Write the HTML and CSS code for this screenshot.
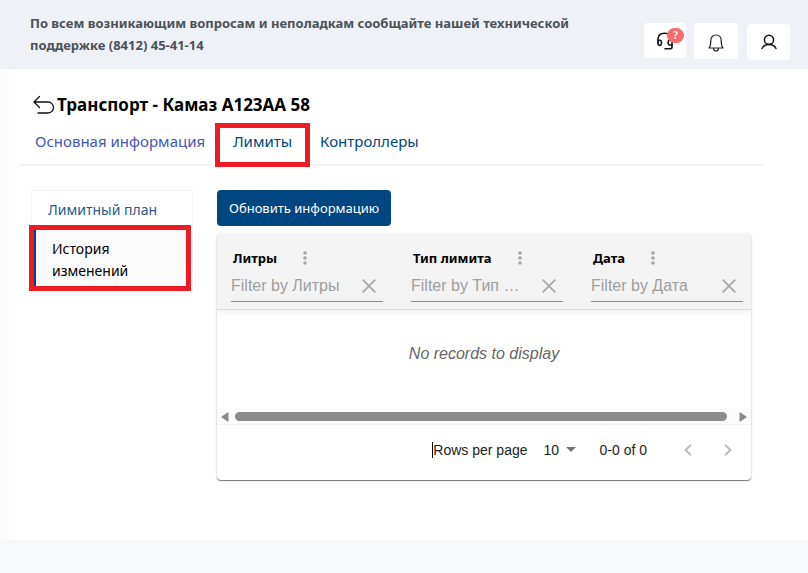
FILE: index.html
```html
<!DOCTYPE html>
<html lang="ru">
<head>
<meta charset="utf-8">
<meta name="viewport" content="width=device-width, initial-scale=1">
<title>Транспорт</title>
<link rel="stylesheet" href="styles.css">
</head>
<body>
<header class="topbar">
  <p class="notice">По всем возникающим вопросам и неполадкам сообщайте нашей технической поддержке (8412) 45-41-14</p>
  <div class="actions">
    <button class="action action-support" type="button" aria-label="Поддержка">
      <svg width="18" height="18" viewBox="0 0 18 18" fill="none" stroke="#111" stroke-width="1.600" stroke-linecap="round" stroke-linejoin="round"><path d="M2 11V7.500C2 3.500 4.500 1.200 8.500 1.200s7.500 2.300 7.500 6.300v7.500c0 1-.8 1.700-1.800 1.700H9"/><path d="M2 8.200h1.800c1 0 1.600.7 1.600 1.600v2c0 1-.7 1.600-1.600 1.600h-.2c-1 0-1.600-.7-1.600-1.600zM16 8.200h-2.200c-1 0-1.600.7-1.600 1.600v1.600c0 1 .7 1.600 1.600 1.600H16"/></svg>
      <span class="badge">?</span>
    </button>
    <button class="action action-bell" type="button" aria-label="Уведомления">
      <svg width="16" height="18" viewBox="0 0 16 18" fill="none" stroke="#222" stroke-width="1.200" stroke-linejoin="round"><path d="M1 14c1.400-1.800 1.800-4 1.800-7.500C2.800 3.200 5 1 8 1s5.200 2.200 5.200 5.500c0 3.500.4 5.700 1.800 7.500z"/><path d="M5.500 14c0 1.800 1 3 2.500 3s2.500-1.200 2.500-3"/></svg>
    </button>
    <button class="action action-user" type="button" aria-label="Профиль">
      <svg width="16" height="16" viewBox="0 0 16 16" fill="none" stroke="#111" stroke-width="1.500" stroke-linecap="round"><circle cx="8" cy="5.800" r="4.600"/><path d="M1 14.500c1.200-2.700 3.800-4.100 7-4.100s5.800 1.400 7 4.100"/></svg>
    </button>
  </div>
</header>
<main class="page">
  <div class="heading">
    <a class="back" href="#" aria-label="Назад"><svg width="22" height="20" viewBox="0 0 22 20" fill="none" stroke="#111" stroke-width="1.300" stroke-linecap="round" stroke-linejoin="round"><path d="M6.500 1.500L1 7l5.500 5.500M1 7h14a5.500 5.500 0 0 1 0 11H5"/></svg></a>
    <h1 class="title">Транспорт - Камаз А123АА 58</h1>
  </div>
  <nav class="tabs">
    <a class="tab tab-first" href="#">Основная информация</a>
    <a class="tab marked" href="#">Лимиты</a>
    <a class="tab" href="#">Контроллеры</a>
  </nav>
  <div class="columns">
    <nav class="side">
      <a class="side-link" href="#">Лимитный план</a>
      <a class="side-link side-current marked" href="#"><span>История изменений</span></a>
    </nav>
    <section class="content">
      <button class="refresh" type="button">Обновить информацию</button>
      <div class="card">
        <table class="grid">
          <colgroup><col class="col"><col class="col"><col></colgroup>
          <thead>
            <tr>
              <th><div class="col-head"><span>Литры</span><button class="more" type="button" aria-label="Меню столбца"><svg width="4" height="14" viewBox="0 0 4 14" fill="#a6a6a6"><circle cx="2" cy="2" r="1.800"/><circle cx="2" cy="7" r="1.800"/><circle cx="2" cy="12" r="1.800"/></svg></button></div>
                <div class="filter"><input type="text" aria-label="Литры" placeholder="Filter by Литры"><button class="clear" type="button" aria-label="Очистить"><svg width="14" height="14" viewBox="0 0 14 14" stroke="#a9a9a9" stroke-width="1.800"><path d="M.7.7l12.600 12.600M13.300.7L.7 13.300"/></svg></button></div></th>
              <th><div class="col-head"><span>Тип лимита</span><button class="more" type="button" aria-label="Меню столбца"><svg width="4" height="14" viewBox="0 0 4 14" fill="#a6a6a6"><circle cx="2" cy="2" r="1.800"/><circle cx="2" cy="7" r="1.800"/><circle cx="2" cy="12" r="1.800"/></svg></button></div>
                <div class="filter"><input type="text" aria-label="Тип лимита" placeholder="Filter by Тип лимита"><button class="clear" type="button" aria-label="Очистить"><svg width="14" height="14" viewBox="0 0 14 14" stroke="#a9a9a9" stroke-width="1.800"><path d="M.7.7l12.600 12.600M13.300.7L.7 13.300"/></svg></button></div></th>
              <th><div class="col-head"><span>Дата</span><button class="more" type="button" aria-label="Меню столбца"><svg width="4" height="14" viewBox="0 0 4 14" fill="#a6a6a6"><circle cx="2" cy="2" r="1.800"/><circle cx="2" cy="7" r="1.800"/><circle cx="2" cy="12" r="1.800"/></svg></button></div>
                <div class="filter"><input type="text" aria-label="Дата" placeholder="Filter by Дата"><button class="clear" type="button" aria-label="Очистить"><svg width="14" height="14" viewBox="0 0 14 14" stroke="#a9a9a9" stroke-width="1.800"><path d="M.7.7l12.600 12.600M13.300.7L.7 13.300"/></svg></button></div></th>
            </tr>
          </thead>
          <tbody><tr><td class="empty" colspan="3">No records to display</td></tr></tbody>
        </table>
        <div class="scroll">
          <svg width="8" height="10" viewBox="0 0 8 10" fill="#8b8b8b"><path d="M7.500 1v8c0 .6-.6.8-1 .5L.7 5.600a.7.7 0 0 1 0-1.200L6.500.5c.4-.3 1-.1 1 .5z"/></svg>
          <div class="thumb"></div>
          <svg width="8" height="10" viewBox="0 0 8 10" fill="#8b8b8b"><path d="M.5 1v8c0 .6.600.8 1 .5l5.800-3.900a.7.7 0 0 0 0-1.200L1.500.5c-.4-.3-1-.1-1 .5z"/></svg>
        </div>
        <div class="pager">
          <label class="rows-label" for="rows">Rows per page</label>
          <div class="rows">
            <select id="rows"><option>10</option></select>
            <svg width="10" height="5" viewBox="0 0 10 5" fill="#757575"><path d="M0 0h10L5 5z"/></svg>
          </div>
          <span class="range">0-0 of 0</span>
          <button class="step" type="button" aria-label="Previous"><svg width="8" height="12" viewBox="0 0 8 12" fill="none" stroke="#bababa" stroke-width="1.900"><path d="M7 .8L1.600 6 7 11.200"/></svg></button>
          <button class="step" type="button" aria-label="Next"><svg width="8" height="12" viewBox="0 0 8 12" fill="none" stroke="#bababa" stroke-width="1.900"><path d="M1 .8L6.400 6 1 11.200"/></svg></button>
        </div>
      </div>
    </section>
  </div>
</main>
</body>
</html>
```
FILE: styles.css
```css
* { box-sizing: border-box; }

body {
  margin: 0;
  min-height: 100vh;
  background: #f7f8fa;
  font: 14px/22px "Noto Sans", sans-serif;
  color: #000;
}

a { color: inherit; text-decoration: none; }

button {
  margin: 0;
  padding: 0;
  border: 0;
  background: none;
  font: inherit;
  cursor: pointer;
}

svg { display: block; flex: none; }

.topbar {
  display: flex;
  justify-content: space-between;
  align-items: flex-start;
  min-height: 69px;
  padding: 12px 18px 0 30px;
  background: #eef2f7;
}

.notice {
  max-width: 580px;
  margin: 0;
  font-size: 13px;
  font-weight: 700;
  color: #4c5156;
}

.actions { display: flex; gap: 8px; padding-top: 11px; }

.action {
  position: relative;
  display: flex;
  align-items: center;
  justify-content: center;
  width: 44px;
  height: 36px;
  border-radius: 4px;
  background: #fff;
}

.action-support { width: 42px; height: 35px; }
.action-bell svg { margin-top: 3px; }
.action-user { width: 43px; margin: 1px 0 0 1px; }

.badge {
  position: absolute;
  top: 5px;
  right: 2px;
  width: 17px;
  border-radius: 8px;
  background: #f56c6c;
  color: #fff;
  font-size: 10px;
  font-weight: 600;
  line-height: 15px;
  text-align: center;
}

.page {
  min-height: 471px;
  padding: 24px 45px 60px 19px;
  background: linear-gradient(90deg, #fbfbfb, #fff 14px);
}

.heading { display: flex; align-items: center; gap: 2px; padding-left: 14px; }

.title { margin: 0; font-size: 17px; line-height: 24px; font-weight: 700; }

.tabs {
  display: flex;
  padding-left: 6px;
  height: 49px;
  border-bottom: 2px solid #f5f5f5;
  font-size: 15px;
  color: #004680;
}

.tab { height: 44px; margin-top: 6px; padding: 7px 10px; }
.tab-first { color: #4655b5; }
.tab.marked { padding: 2px 13px; }

.marked { border: 5px solid #ed1c24; }

.columns { display: flex; align-items: flex-start; gap: 24px; padding: 24px 12px 0; }

.side {
  flex: none;
  width: 162px;
  border: 1px solid #f3f3f3;
  border-bottom: 0;
  color: #2a5a8b;
}

.side-link { display: block; padding: 8px 16px 4px; }

.side-current {
  width: 162px;
  margin-left: -3px;
  padding: 0;
  background: #fafafa;
  color: #000;
}

.side-current span { display: block; padding: 8px 16px 4px; border-left: 2px solid #004680; }

.content { flex: 1; min-width: 0; }

.refresh {
  display: block;
  height: 36px;
  padding: 0 12px;
  border-radius: 4px;
  background: #004680;
  color: #fff;
  font-size: 13px;
  font-weight: 400;
}

.card {
  margin-top: 8px;
  border-radius: 4px;
  background: #fff;
  box-shadow: 0 1px 1px #777, 0 0 3px #ddd;
  font-family: "Liberation Sans", Arial, sans-serif;
  overflow: hidden;
}

.grid { width: 100%; table-layout: fixed; border-collapse: collapse; }
.grid thead { box-shadow: 0 3px 6px #eee; }
.col { width: 180px; }

.grid th {
  height: 75px;
  padding: 13px 14px 6px;
  border-bottom: 1px solid #dcdcdc;
  background: #f3f3f3;
  text-align: left;
  vertical-align: top;
}

.grid th:last-child { padding-right: 8px; }

.col-head {
  display: flex;
  align-items: center;
  gap: 26px;
  padding-left: 2px;
  font: 700 13px/22px "Noto Sans", sans-serif;
}

.filter {
  display: flex;
  align-items: center;
  height: 33px;
  padding-top: 2px;
  border-bottom: 1px solid #8c8c8c;
}

.filter input {
  flex: 1;
  min-width: 0;
  padding: 0;
  border: 0;
  outline: 0;
  background: none;
  font: 16px/20px "Liberation Sans", Arial, sans-serif;
  text-overflow: ellipsis;
}

.filter input::placeholder { color: #9f9f9f; opacity: 1; }
.clear { padding: 0 7px 0 18px; }

.empty {
  height: 100px;
  padding: 0 0 10px;
  color: #666;
  font-size: 16px;
  font-style: italic;
  text-align: center;
}

.scroll {
  display: flex;
  align-items: center;
  gap: 6px;
  height: 16px;
  padding: 0 4px;
  border-bottom: 1px solid #f1f1f1;
  background: #fcfcfc;
}

.thumb { flex: 1; height: 9px; margin-right: 6px; border-radius: 5px; background: #8b8b8b; }

.pager {
  display: flex;
  align-items: center;
  justify-content: flex-end;
  height: 55px;
  padding: 0 19px 6px 0;
  font-size: 14px;
  color: #222;
}

.rows-label { border-left: 1px solid #000; line-height: 16px; }
.rows { display: flex; align-items: center; margin: 0 24px 0 16px; }

.rows select {
  appearance: none;
  width: 22px;
  padding: 0;
  border: 0;
  background: none;
  color: inherit;
  font: inherit;
}

.range { margin-right: 37px; }
.step + .step { margin-left: 32px; }
```
